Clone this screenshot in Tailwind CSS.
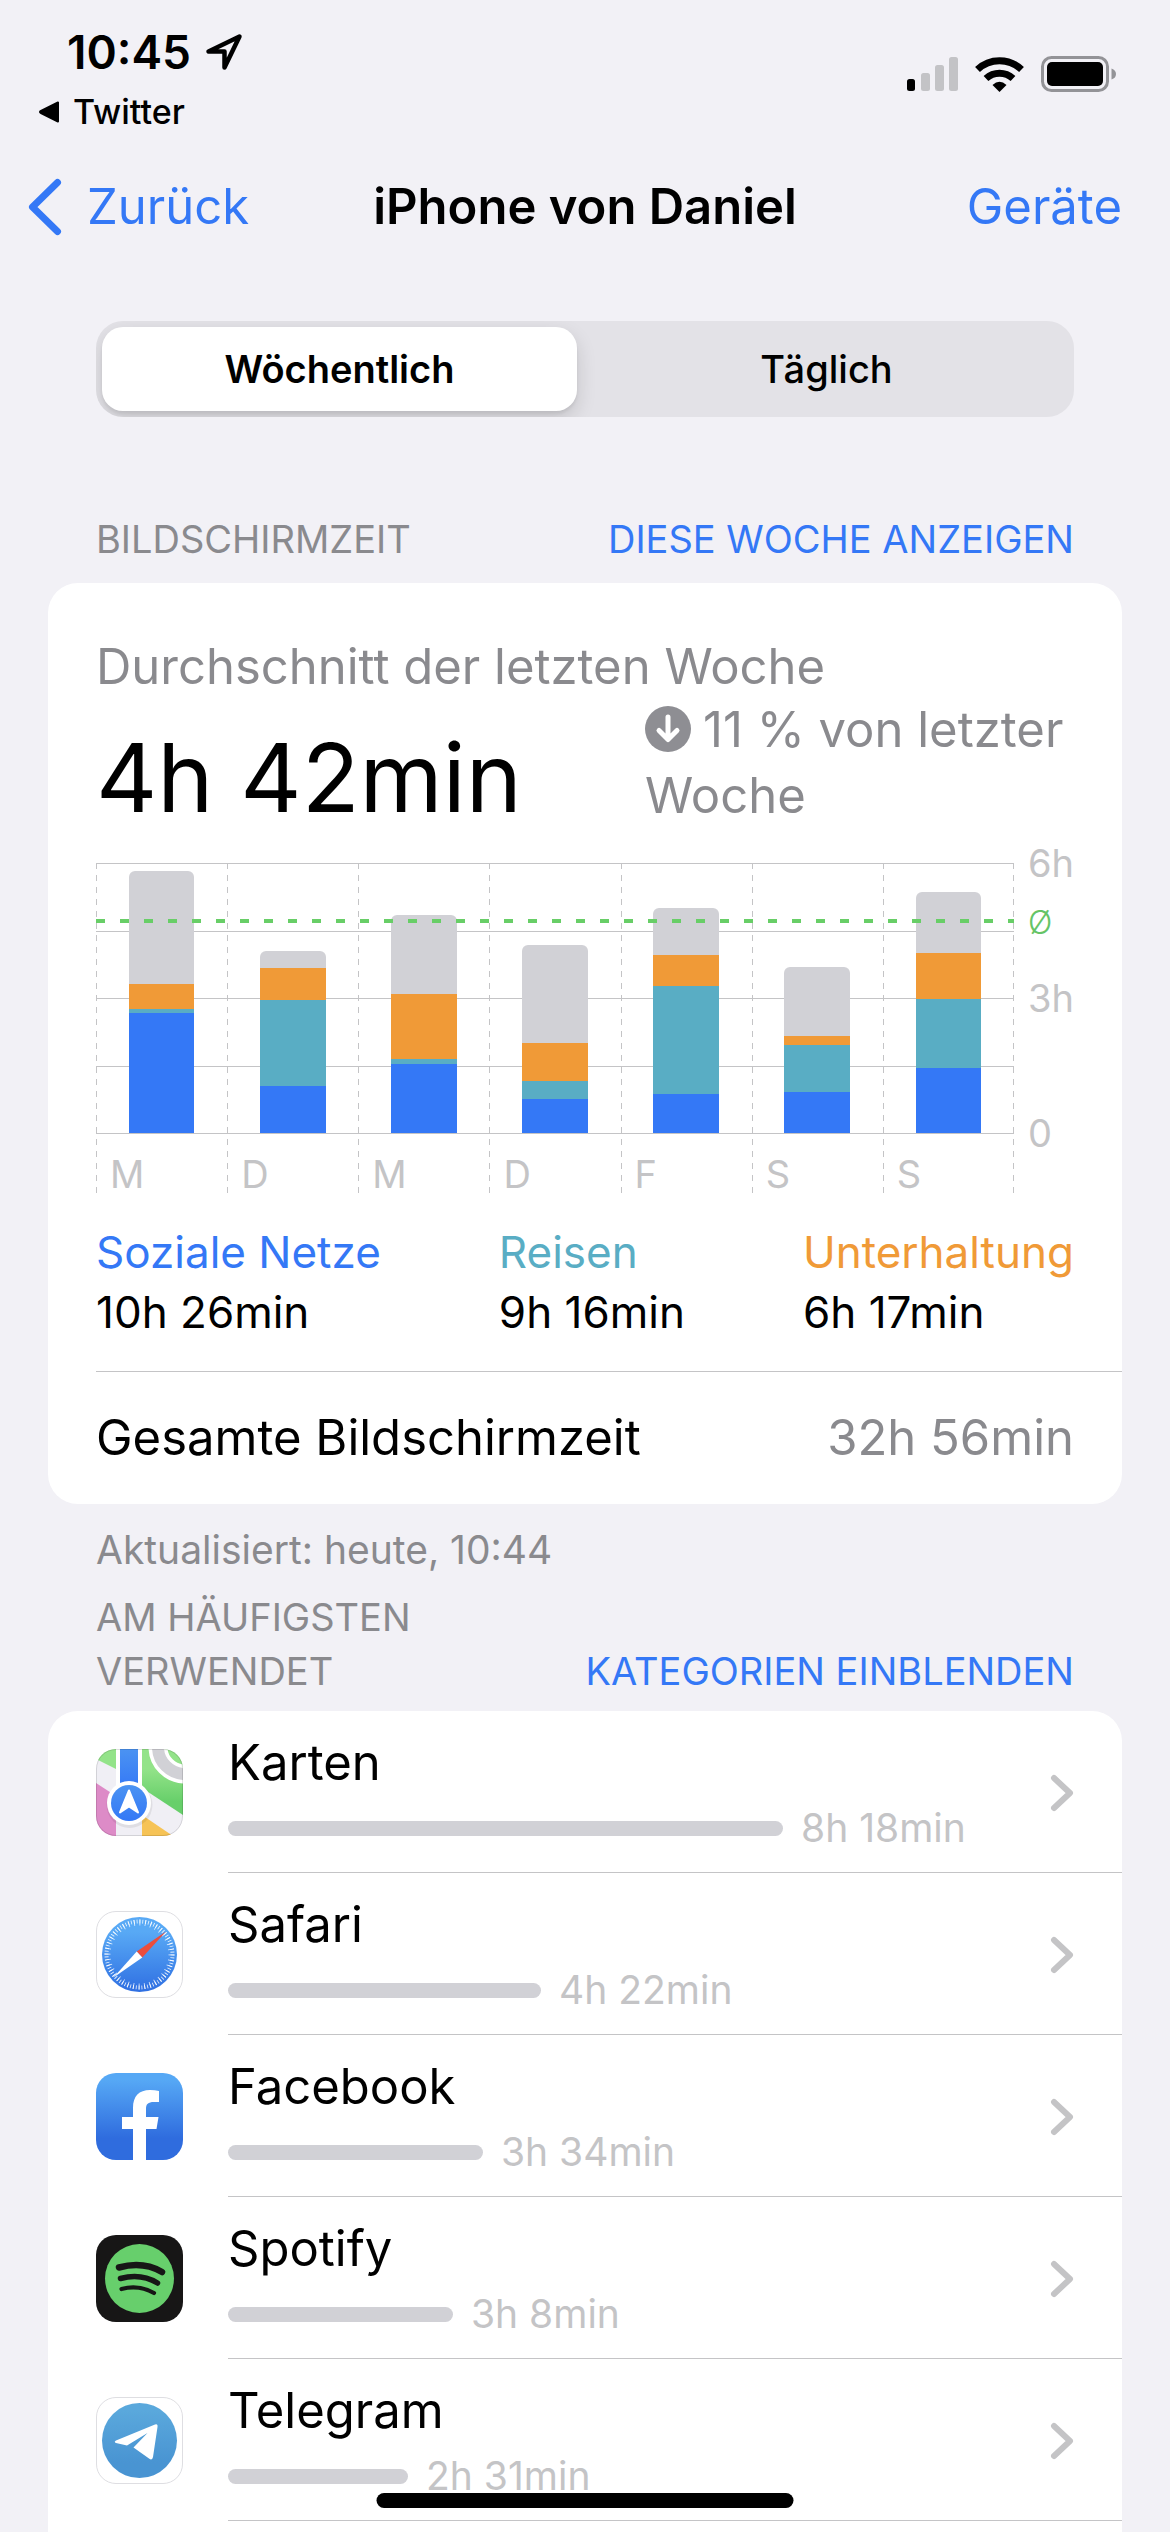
<!DOCTYPE html>
<html lang="de">
<head>
<meta charset="utf-8">
<meta name="viewport" content="width=device-width, initial-scale=1">
<title>Bildschirmzeit</title>
<script src="https://cdn.jsdelivr.net/npm/@tailwindcss/browser@4"></script>
</head>
<body class="flex min-h-screen flex-col overflow-x-hidden bg-[#f2f1f6] font-['Inter',sans-serif] text-[49px] text-black">

<!-- Status bar -->
<div class="flex items-start justify-between pt-6 pr-[54px] pl-[39px]">
  <div>
    <div class="flex items-center gap-3.5 pl-7 text-[46px] leading-[56px] font-semibold">
      <span>10:45</span>
      <svg class="h-[38px] w-[38px]" viewBox="0 0 38 38" fill="none" stroke="#000" stroke-width="4.5" stroke-linejoin="round" aria-hidden="true"><path d="M34.500 3.500 3.500 18.500H19.500V34.500Z"/></svg>
    </div>
    <a href="#twitter" class="mt-3 flex items-center gap-3 text-[34px] leading-10 font-medium">
      <svg class="h-[22px] w-[22px]" viewBox="0 0 22 22" aria-hidden="true"><path d="M19 1.500V20.500L2 12Q0 11 2 10Z" stroke="#000" stroke-width="2" stroke-linejoin="round"/></svg>
      Twitter
    </a>
  </div>
  <div class="flex items-center gap-[17px] pt-8">
    <svg class="h-[34px] w-[51px]" viewBox="0 0 51 34" fill="#c3c3c6" role="img" aria-label="Mobilfunk"><rect y="22" width="8" height="12" rx="2.500" fill="#000"/><rect x="14" y="16" width="9" height="18" rx="2.500"/><rect x="28" y="8" width="9" height="26" rx="2.500"/><rect x="42" width="9" height="34" rx="2.500"/></svg>
    <svg class="h-[36px] w-[49px]" viewBox="0 0 49 36" role="img" aria-label="WLAN"><g fill="none" stroke="#000" stroke-width="7"><path d="M2.500 13.500A32 32 0 0 1 46.500 13.500"/><path d="M11 22.500A20 20 0 0 1 38 22.500"/></g><path d="M17.500 29Q24.500 22.500 31.500 29L24.500 36Z"/></svg>
    <svg class="h-[36px] w-[75px]" viewBox="0 0 75 36" role="img" aria-label="Batterie"><rect x="1.500" y="1.500" width="65" height="33" rx="9" fill="none" stroke="#939397" stroke-width="3"/><rect x="6" y="6" width="56" height="24" rx="5"/><path d="M70.500 12.500Q75 14 75 18T70.500 23.500Z" fill="#939397"/></svg>
  </div>
</div>

<!-- Navigation -->
<nav class="mt-[42px] grid grid-cols-[1fr_auto_1fr] items-center px-7 leading-[66px]">
  <a href="#back" class="flex items-center gap-[25px] text-[#3478f6]">
    <svg class="h-[58px] w-[34px]" viewBox="0 0 34 58" fill="none" stroke="#3478f6" stroke-width="7" stroke-linecap="round" stroke-linejoin="round" aria-hidden="true"><path d="M29.500 4.500 4.500 29 29.500 53.500"/></svg>
    Zurück
  </a>
  <h1 class="font-semibold">iPhone von Daniel</h1>
  <a href="#devices" class="justify-self-end pr-5 text-[#3478f6]">Geräte</a>
</nav>

<!-- Range switch -->
<div class="mx-24 mt-[81px] grid grid-cols-2 overflow-hidden rounded-[27px] bg-[#e3e2e7] p-1.5 text-[38px] leading-[84px]" role="tablist">
  <button type="button" role="tab" aria-selected="true" class="mr-2 rounded-[21px] bg-white font-semibold shadow-[0_8px_20px_rgba(0,0,0,0.14),0_3px_3px_rgba(0,0,0,0.06)]">Wöchentlich</button>
  <button type="button" role="tab" aria-selected="false" class="font-medium">Täglich</button>
</div>

<div class="mt-[95px] flex items-end justify-between px-24 text-[38px] leading-[54px]">
  <h2 class="text-[#8a8a8e]">BILDSCHIRMZEIT</h2>
  <a href="#week" class="text-[#3478f6]">DIESE WOCHE ANZEIGEN</a>
</div>

<!-- Weekly summary -->
<section class="mx-12 mt-[17px] rounded-[30px] bg-white pt-[54px] pl-12">
  <div class="pr-12">
    <p class="leading-[60px] text-[#8a8a8e]">Durchschnitt der letzten Woche</p>
    <div class="flex items-end justify-between">
      <p class="text-[95px] leading-[102px]">4h 42min</p>
      <p class="w-[429px] leading-[66px] text-[#8a8a8e]"><svg class="mr-3 inline-block h-[46px] w-[46px] align-[-5px]" viewBox="0 0 46 46" aria-hidden="true"><circle cx="23" cy="23" r="23" fill="#8e8e93"/><path d="M23 11V33M14 24.500 23 33.500 32 24.500" fill="none" stroke="#fff" stroke-width="5" stroke-linecap="round" stroke-linejoin="round"/></svg>11 % von letzter Woche</p>
    </div>

    <div class="mt-[34px] flex text-[38px] leading-[48px] text-[#c4c4c6]">
      <div class="relative mr-3.5 flex-1 text-[#c4c4c6]">
        <div class="absolute inset-x-0 top-0 flex h-[271px] flex-col justify-between">
          <div class="h-px bg-[#c4c4c6]"></div><div class="h-px bg-[#c4c4c6]"></div><div class="h-px bg-[#c4c4c6]"></div><div class="h-px bg-[#c4c4c6]"></div><div class="h-px bg-[#c4c4c6]"></div>
        </div>
        <div id="days" class="relative grid h-[330px] grid-cols-7 bg-[repeating-linear-gradient(#c4c4c6_0_6px,transparent_6px_12px)] bg-[length:1px_100%] bg-right bg-no-repeat"></div>
        <div class="absolute inset-x-0 top-14 h-1 bg-[repeating-linear-gradient(90deg,#68ce67_0_9px,transparent_9px_24px)]"></div>
      </div>
      <div class="-mt-6 flex w-[46px] flex-col">
        <span>6h</span>
        <span class="h-[87px] pt-3 text-[32px] font-light text-[#65c466]">Ø</span>
        <span class="mb-[87px]">3h</span>
        <span>0</span>
      </div>
    </div>

    <dl class="mt-[29px] flex justify-between text-[44px] leading-[60px]">
      <div><dt class="text-[#3478f6]">Soziale Netze</dt><dd>10h 26min</dd></div>
      <div><dt class="text-[#59adc4]">Reisen</dt><dd>9h 16min</dd></div>
      <div><dt class="text-[#f09a37]">Unterhaltung</dt><dd>6h 17min</dd></div>
    </dl>
  </div>
  <div class="mt-[29px] flex h-[133px] items-center justify-between border-t border-[#c4c4c6] pr-12">
    <span>Gesamte Bildschirmzeit</span>
    <span class="text-[#8a8a8e]">32h 56min</span>
  </div>
</section>

<p class="mt-[19px] px-24 text-[39px] leading-[54px] text-[#8a8a8e]">Aktualisiert: heute, 10:44</p>

<div class="mt-[13px] flex items-end justify-between px-24 text-[38px] leading-[54px]">
  <h2 class="w-[400px] text-[#8a8a8e]">AM HÄUFIGSTEN VERWENDET</h2>
  <a href="#categories" class="text-[#3478f6]">KATEGORIEN EINBLENDEN</a>
</div>

<!-- Most used apps -->
<ul id="apps" class="mx-12 mt-[13px] flex-1 rounded-t-[30px] bg-white pl-12"></ul>

<div class="fixed bottom-6 left-1/2 h-[15px] w-[417px] -translate-x-1/2 rounded-full bg-black"></div>

<template id="icon-karten">
  <svg class="h-[87px] w-[87px] shrink-0" viewBox="0 0 87 87" aria-hidden="true">
    <defs>
      <clipPath id="mapClip"><rect width="87" height="87" rx="20"/></clipPath>
      <linearGradient id="mapGreen" x2="0" y2="1"><stop offset=".3" stop-color="#93e389"/><stop offset=".8" stop-color="#67cf6a"/></linearGradient>
      <linearGradient id="mapBlue" x2="0" y2="1"><stop stop-color="#4b93f2"/><stop offset="1" stop-color="#3478f6"/></linearGradient>
    </defs>
    <g clip-path="url(#mapClip)">
      <rect width="87" height="87" fill="#f0eff5"/>
      <path d="M0 0H20V20L0 10Z" fill="#93e389"/>
      <path d="M46 0H87V66L46 39Z" fill="url(#mapGreen)"/>
      <circle cx="89" cy="-2" r="27" fill="none" stroke="#fff" stroke-width="19"/>
      <circle cx="89" cy="-2" r="27" fill="none" stroke="#d1d1d6" stroke-width="12"/>
      <path d="M0 34 20 47V87H0Z" fill="#dd8bc7"/>
      <path d="M46 66 77 87H46Z" fill="#f6c356"/>
      <path d="M20 0H46V40H20Z" fill="#fff"/>
      <path d="M24 0H42V40H24Z" fill="url(#mapBlue)"/>
      <circle cx="33.500" cy="56" r="23" fill="#000" opacity=".07"/>
      <circle cx="33" cy="54" r="22" fill="#fff"/>
      <circle cx="33" cy="54" r="18" fill="url(#mapBlue)"/>
      <path d="M33 41.500 42 63.500 33 57.500 24 63.500Z" fill="#fff" stroke="#fff" stroke-width="2" stroke-linejoin="round"/>
    </g>
    <rect x=".5" y=".5" width="86" height="86" rx="19.500" fill="none" stroke="#000" stroke-opacity=".12"/>
  </svg>
</template>
<template id="icon-safari">
  <svg class="h-[87px] w-[87px] shrink-0" viewBox="0 0 87 87" aria-hidden="true">
    <defs><linearGradient id="safBlue" x2="0" y2="1"><stop offset=".2" stop-color="#58a9f5"/><stop offset="1" stop-color="#2f6fe2"/></linearGradient></defs>
    <rect x=".5" y=".5" width="86" height="86" rx="19.500" fill="#fff" stroke="#dedee2"/>
    <circle cx="43.500" cy="43.500" r="37.500" fill="url(#safBlue)"/>
    <g fill="none" stroke="#fff" stroke-opacity=".85"><circle cx="43.500" cy="43.500" r="33" stroke-width="4" pathLength="144" stroke-dasharray=".6 1.400"/><circle cx="43.500" cy="43.500" r="32" stroke-width="6" pathLength="144" stroke-dasharray=".6 3.400"/></g>
    <path d="M70 20.500 40.700 40.500 46.300 46.500Z" fill="#eb4d3d"/>
    <path d="M17.500 66.500 40.700 40.500 46.300 46.500Z" fill="#fff"/>
  </svg>
</template>
<template id="icon-facebook">
  <svg class="h-[87px] w-[87px] shrink-0" viewBox="0 0 87 87" aria-hidden="true">
    <defs><linearGradient id="fbBlue" x2="0" y2="1"><stop offset=".08" stop-color="#56a8f5"/><stop offset=".75" stop-color="#2f6cde"/></linearGradient></defs>
    <rect width="87" height="87" rx="20" fill="url(#fbBlue)"/>
    <path d="M37 87V56H26V44H37V35C37 23 43 17 54 17Q59 17 63 18V29H58C52 29 50 31 50 36V44H62.500L60.500 56H50V87Z" fill="#fff"/>
  </svg>
</template>
<template id="icon-spotify">
  <svg class="h-[87px] w-[87px] shrink-0" viewBox="0 0 87 87" aria-hidden="true">
    <rect width="87" height="87" rx="20" fill="#171616"/>
    <circle cx="43.500" cy="43.500" r="34.500" fill="#67cf6c"/>
    <g fill="none" stroke="#171616" stroke-linecap="round"><path d="M23 32.500Q47 26 66 37" stroke-width="6.500"/><path d="M24.500 43.500Q45 38 61.500 48" stroke-width="5.500"/><path d="M25.500 54Q43 49.500 58 58" stroke-width="4.200"/></g>
  </svg>
</template>
<template id="icon-telegram">
  <svg class="h-[87px] w-[87px] shrink-0" viewBox="0 0 87 87" aria-hidden="true">
    <defs><linearGradient id="tgBlue" x2="0" y2="1"><stop offset=".1" stop-color="#5aa8dc"/><stop offset=".8" stop-color="#4994d2"/></linearGradient></defs>
    <rect x=".5" y=".5" width="86" height="86" rx="19.500" fill="#fff" stroke="#dedee2"/>
    <circle cx="43.500" cy="43.500" r="37.500" fill="url(#tgBlue)"/>
    <path d="M20 43.500 59 27.500Q62 26.500 61.500 30L57 60Q56.300 64 53 61.500L37.500 50.500 51.500 36 31 48.500 20 46Q17.500 44.800 20 43.500Z" fill="#fff"/>
  </svg>
</template>

<script>
  // Bar segments per day, from the top: other, entertainment, travel, social
  const days = [
    ['M', [113, 25, 4, 120]], ['D', [17, 32, 86, 47]], ['M', [79, 65, 5, 69]], ['D', [98, 38, 18, 34]],
    ['F', [47, 31, 108, 39]], ['S', [69, 9, 47, 41]], ['S', [61, 46, 69, 65]],
  ];
  const colors = ['bg-[#d1d1d6]', 'bg-[#f09a37]', 'bg-[#59adc4]', 'bg-[#3478f6]'];
  document.getElementById('days').innerHTML = days.map(([label, parts]) => `
    <div class="flex flex-col bg-[repeating-linear-gradient(#c4c4c6_0_6px,transparent_6px_12px)] bg-[length:1px_100%] bg-no-repeat">
      <div class="flex h-[270px] flex-col justify-end px-[25%]">
        <div class="overflow-hidden rounded-t-md">${parts.map((h, i) => `<div class="${colors[i]}" style="height:${h}px"></div>`).join('')}</div>
      </div>
      <span class="mt-[17px] pl-3.5">${label}</span>
    </div>`).join('');

  const apps = [
    ['karten', 'Karten', '8h 18min', 555], ['safari', 'Safari', '4h 22min', 313], ['facebook', 'Facebook', '3h 34min', 255],
    ['spotify', 'Spotify', '3h 8min', 225], ['telegram', 'Telegram', '2h 31min', 180],
  ];
  document.getElementById('apps').innerHTML = apps.map(([id, name, time, width]) => `
    <li>
      <a href="#${id}" class="flex items-center gap-[45px]">
        ${document.getElementById('icon-' + id).innerHTML}
        <div class="flex flex-1 items-center justify-between border-b border-[#c4c4c6] pt-[19px] pr-12 pb-[17px]">
          <div>
            <div class="leading-[66px]">${name}</div>
            <div class="mt-[5px] flex items-center gap-[18px] text-[39px] leading-[54px] text-[#c4c4c6]">
              <div class="h-[15px] rounded-full bg-[#d1d1d6]" style="width:${width}px"></div>
              <span>${time}</span>
            </div>
          </div>
          <svg class="h-[38px] w-[24px]" viewBox="0 0 24 38" fill="none" stroke="#c4c4c6" stroke-width="6" stroke-linecap="round" stroke-linejoin="round" aria-hidden="true"><path d="M4 4 20 19 4 34"/></svg>
        </div>
      </a>
    </li>`).join('');
</script>
</body>
</html>
